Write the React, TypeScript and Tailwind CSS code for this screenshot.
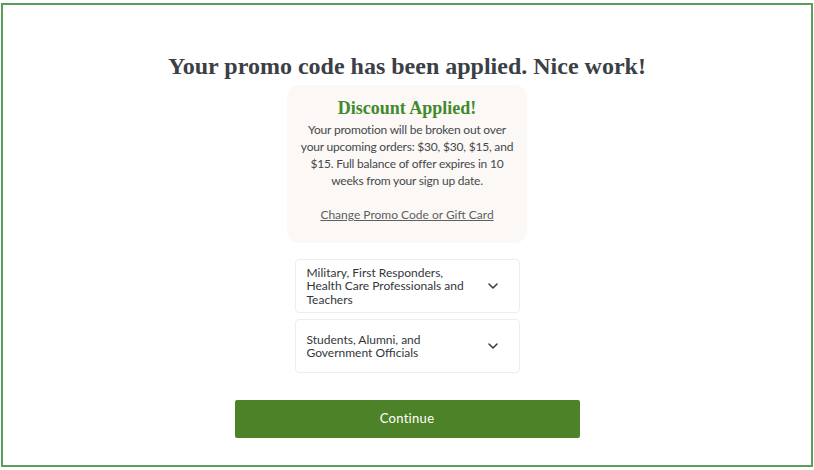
import { ChevronDown } from 'lucide-react';

const sans = { fontFamily: 'Lato, "Open Sans", sans-serif' };
const serif = { fontFamily: '"Liberation Serif", "DejaVu Serif", serif' };

const groups = [
    'Military, First Responders, Health Care Professionals and Teachers',
    'Students, Alumni, and Government Officials',
];

export default function App() {
    return (
        <div className="w-[814px] h-[470px] bg-white pt-[3px] pl-[1px] pr-[1px] pb-[3px]">
            <div className="h-full border-2 border-[#5a9e5c] flex flex-col items-center pt-[46px]" style={sans}>
                <h1 className="text-[24px] leading-[30px] font-bold text-[#3b3f46]" style={serif}>
                    Your promo code has been applied. Nice work!
                </h1>

                <div className="mt-[4px] w-[240px] rounded-[12px] bg-[#fcf8f5] px-[10px] pt-[11px] pb-[18px] text-center">
                    <h2 className="text-[18px] leading-[24px] font-bold text-[#3f8a2d]" style={serif}>Discount Applied!</h2>
                    <p className="mt-[1px] text-[12px] leading-[17px] tracking-[-0.2px] text-[#45484d]">
                        Your promotion will be broken out over your upcoming orders: $30, $30, $15, and $15. Full
                        balance of offer expires in 10 weeks from your sign up date.
                    </p>
                    <a href="#" className="mt-[17px] inline-block text-[12px] leading-[17px] text-[#5c5f63] underline">
                        Change Promo Code or Gift Card
                    </a>
                </div>

                <div className="mt-[16px] w-[225px] flex flex-col gap-[6px]">
                    {groups.map((label) => (
                        <div
                            key={label}
                            className="h-[54px] rounded-[4px] border border-[#eeeeee] pl-[11px] pr-[18px] flex items-center justify-between"
                        >
                            <span className="text-[12px] leading-[13.5px] text-[#33363b] w-[170px]">{label}</span>
                            <ChevronDown className="h-[16px] w-[16px] text-[#33363b]" strokeWidth={2.2} />
                        </div>
                    ))}
                </div>

                <button className="mt-[27px] w-[345px] h-[38px] rounded-[2px] bg-[#4e8228] text-white text-[13px] tracking-[0.3px]">
                    Continue
                </button>
            </div>
        </div>
    );
}
